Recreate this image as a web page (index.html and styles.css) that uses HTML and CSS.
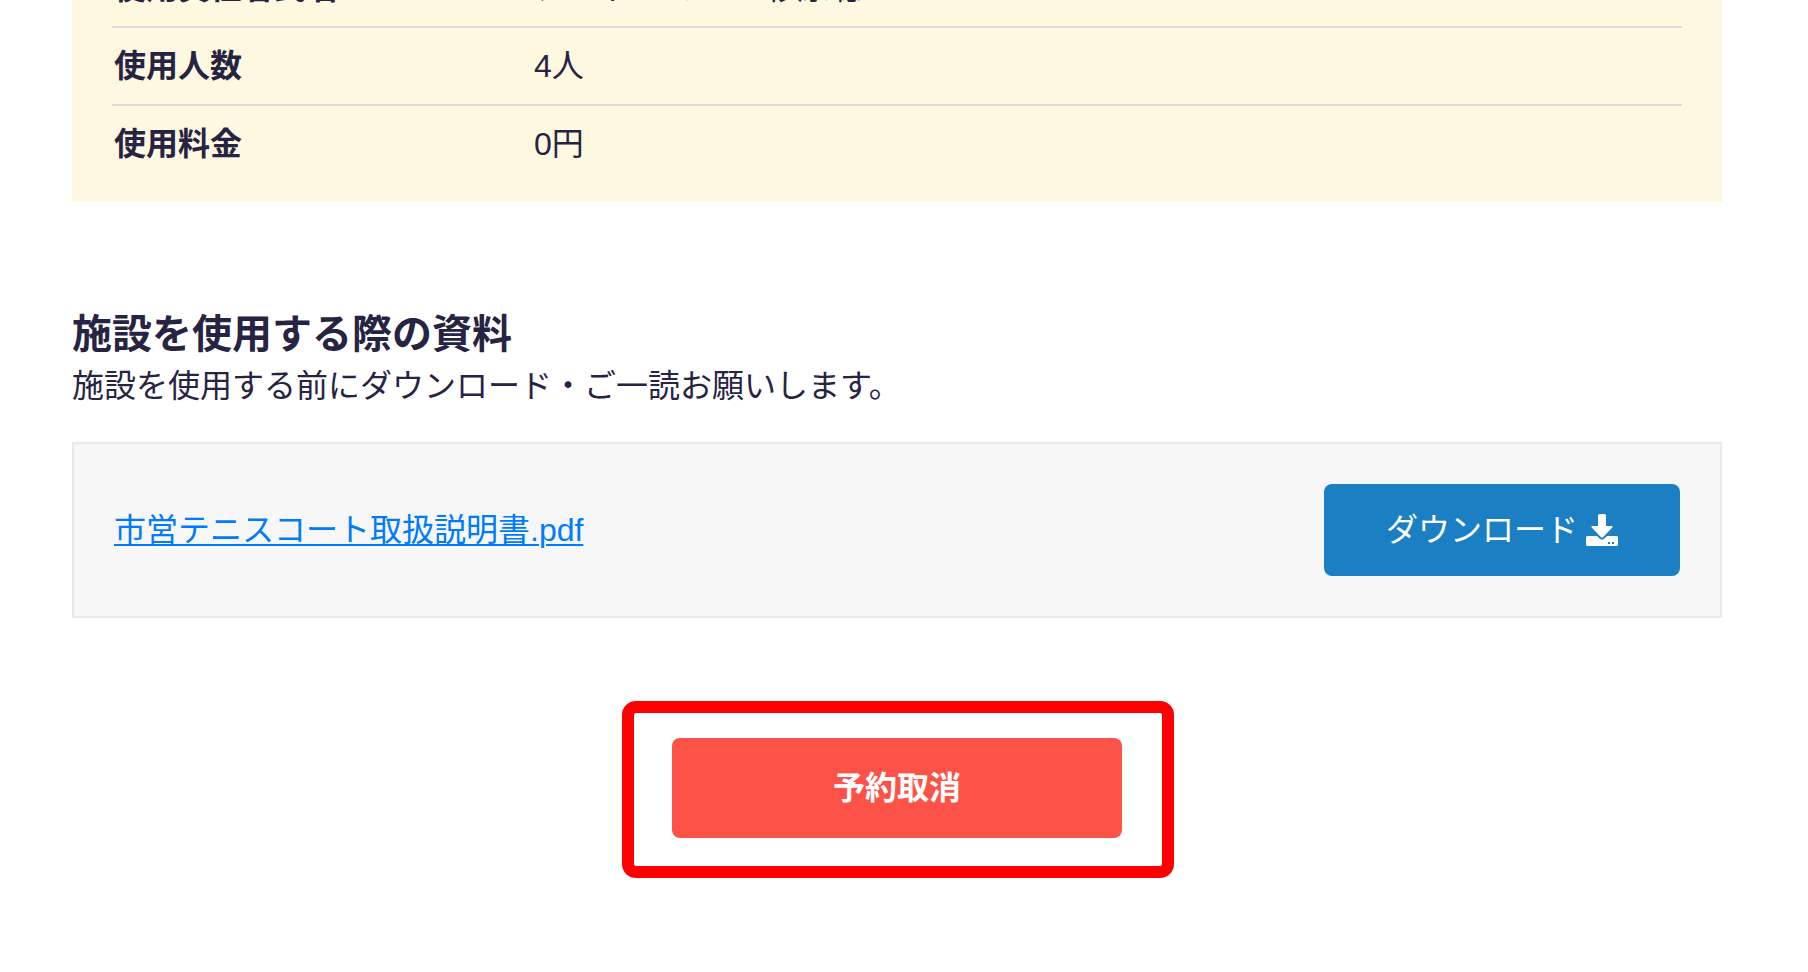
FILE: index.html
```html
<!DOCTYPE html>
<html lang="ja">
<head>
<meta charset="utf-8">
<title>予約内容</title>
<link rel="stylesheet" href="styles.css">
</head>
<body>
<main class="page">
  <section class="summary">
    <table class="summary-table">
      <tr><th scope="row">使用責任者氏名</th><td>アイネルスール 杉原聡</td></tr>
      <tr><th scope="row">使用人数</th><td>4人</td></tr>
      <tr><th scope="row">使用料金</th><td>0円</td></tr>
    </table>
  </section>
  <section class="documents">
    <h2 class="documents-title">施設を使用する際の資料</h2>
    <p class="documents-note">施設を使用する前にダウンロード・ご一読お願いします。</p>
    <div class="file">
      <a class="file-link" href="#">市営テニスコート取扱説明書.pdf</a>
      <button class="download" type="button">ダウンロード
        <svg class="download-icon" viewBox="0 0 32 32" aria-hidden="true"><path d="M13.500 0h5q1.500 0 1.500 1.500V12h5.500q2 0 .8 1.600l-9.300 9.700q-1 .9-2 0L5.700 13.600Q4.500 12 6.500 12H12V1.500Q12 0 13.500 0z"/><path fill-rule="evenodd" d="M1.500 22H11l2.500 2.600q2.500 2.200 5 0L21 22h9.500q1.500 0 1.500 1.500v7q0 1.500-1.500 1.500h-29Q0 32 0 30.500v-7Q0 22 1.500 22zM22 28v2h2v-2zm4 0v2h2v-2z"/></svg>
      </button>
    </div>
  </section>
  <div class="cancel-area">
    <button class="cancel" type="button">予約取消</button>
    <span class="highlight" aria-hidden="true"></span>
  </div>
</main>
</body>
</html>
```
FILE: styles.css
```css
* { box-sizing: border-box; }
body {
  margin: 0;
  background: #fff;
  color: #272343;
  font-family: "Liberation Sans", "Noto Sans CJK JP", sans-serif;
  font-size: 32px;
  line-height: 48px;
}
button { font: inherit; border: 0; color: #fff; border-radius: 8px; cursor: pointer; }
.page {
  display: flex;
  flex-direction: column;
  margin: -50px 86px 0 72px;
  padding-bottom: 80px;
}
.summary { padding: 0 40px 20px; background: #fff8e1; }
.summary-table { width: 100%; border-collapse: separate; border-spacing: 0; table-layout: fixed; }
.summary-table th,
.summary-table td { padding: 14px 2px; text-align: left; border-bottom: 2px solid #dcdcdc; }
.summary-table tr:last-child > * { border-bottom: 0; }
.summary-table th { width: 420px; font-weight: 700; }
.documents { margin-top: 104px; }
.documents-title { margin: 0; font-size: 40px; line-height: 56px; }
.documents-note { margin: 0 0 32px; }
.file {
  display: flex;
  align-items: center;
  justify-content: space-between;
  padding: 40px;
  background: #f7f7f7;
  border: 2px solid #e9e9e9;
}
.file-link { color: #007bff; text-underline-offset: 3px; text-decoration-thickness: 2px; }
.download {
  display: flex;
  align-items: center;
  gap: 8px;
  padding: 22px 62px;
  background: #1b7fc4;
}
.download-icon { width: 32px; height: 32px; fill: #fff; }
.cancel-area {
  position: relative;
  align-self: center;
  margin-top: 120px;
}
.cancel { display: block; width: 450px; padding: 26px 0; background: #fd5248; font-weight: 700; }
/* Outline drawn around the cancel button */
.highlight {
  position: absolute;
  inset: -37px -52px -40px -50px;
  border: 12px solid #f00;
  border-radius: 14px;
  pointer-events: none;
}
```
